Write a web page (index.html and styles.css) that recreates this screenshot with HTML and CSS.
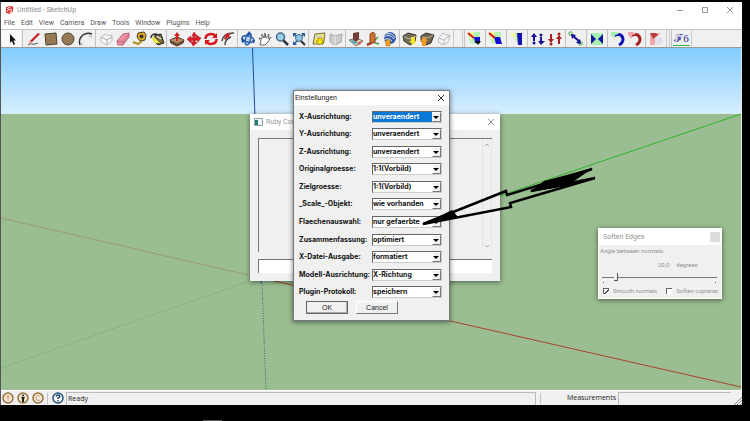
FILE: index.html
```html
<!DOCTYPE html>
<html lang="de">
<head>
<meta charset="utf-8">
<title>Untitled - SketchUp</title>
<link rel="stylesheet" href="styles.css">
</head>
<body>
<div class="app">
  <header class="titlebar">
    <svg class="logo" viewBox="0 0 10 10"><path d="M1 2l5-1.500 3 1v5L5 9.500 1 8z" fill="#e02a2a"/><path d="M2 3.500l4-1.500M3 5l4-1v3L5 8M3 5v2" stroke="#fff" fill="none"/></svg>
    <span class="app-name">Untitled - SketchUp</span>
    <div class="win-buttons">
      <button aria-label="Minimize"><svg viewBox="0 0 8 8"><path d="M1 4.500h6"/></svg></button>
      <button aria-label="Maximize"><svg viewBox="0 0 8 8"><path d="M1.500 1.500h5v5h-5z"/></svg></button>
      <button aria-label="Close"><svg viewBox="0 0 8 8"><path d="M1 1l6 6M7 1l-6 6"/></svg></button>
    </div>
  </header>
  <nav class="menubar">
    <a href="#">File</a><a href="#">Edit</a><a href="#">View</a><a href="#">Camera</a><a href="#">Draw</a><a href="#">Tools</a><a href="#">Window</a><a href="#">Plugins</a><a href="#">Help</a>
  </nav>
  <div class="toolbar">
    <div class="group first">
      <button class="active" aria-label="Select"><svg viewBox="0 0 16 16"><path d="M6 3v9l2-2 1.500 4 1.500-.8L9.500 9.500H12z" fill="#111"/></svg></button>
    </div>
    <div class="group wide">
      <button aria-label="Line"><svg viewBox="0 0 16 16"><path d="M2 14q3-2 4-1t6-1" stroke="#555" fill="none"/><path d="M3 13l1-3 8-8 2 1-8 8z" fill="#c8171d"/><path d="M3 13l1-3 2 1z" fill="#e7c69a"/></svg></button>
      <button aria-label="Rectangle"><svg viewBox="0 0 16 16"><path d="M2 3l11-1 1 11-11 1z" fill="#947b55" stroke="#4c4230"/></svg></button>
      <button aria-label="Circle"><svg viewBox="0 0 16 16"><circle cx="8" cy="8" r="6" fill="#947b55" stroke="#4c4230"/></svg></button>
      <button aria-label="Arc"><svg viewBox="0 0 16 16"><path d="M3 14Q1 8 6 4q4-3 9-1" stroke="#333" stroke-width="1.500" fill="none"/><path d="M4 14l2-2M12 4l3 2" stroke="#999"/></svg></button>
    </div>
    <div class="group">
      <button aria-label="Make Component"><svg viewBox="0 0 16 16"><path d="M3 6l4-3 3 2 4-1v6l-5 4-6-3z" fill="#f7f7f7" stroke="#bbb"/><path d="M3 6l6 3 5-3M9 9v5" stroke="#aaa" fill="none"/></svg></button>
      <button aria-label="Eraser"><svg viewBox="0 0 16 16"><path d="M2 10l6-7 6-1v4l-6 8H3z" fill="#ef92a5" stroke="#b8657b"/><path d="M2 10l6 1 6-8M8 11v3" stroke="#bb637a" fill="none"/></svg></button>
      <button aria-label="Tape Measure"><svg viewBox="0 0 16 16"><path d="M6 2l6-1 2 3-1 5-5 1-3-4z" fill="#e4ae20" stroke="#443f20"/><circle cx="9.500" cy="5.500" r="2" fill="#333"/><path d="M1 11l5 2 4-3" stroke="#b68c1d" stroke-width="2" fill="none"/></svg></button>
      <button aria-label="Paint Bucket"><svg viewBox="0 0 16 16"><path d="M6 4l6-1 3 9-6 2-4-4z" fill="#736a3d" stroke="#2c2c20"/><path d="M2 7q0-4 5-4l4 3" stroke="#333" stroke-width="1.500" fill="none"/><path d="M3 6q0 4 3 6h5L5 6z" fill="#e7e443"/><path d="M8 5l4 3" stroke="#eee" stroke-width="1.500"/></svg></button>
    </div>
    <div class="group">
      <button aria-label="Push/Pull"><svg viewBox="0 0 16 16"><path d="M1 9l7-3 7 3-1 3-6 3-6-3z" fill="#735136" stroke="#49321f"/><path d="M1 9l7 3 7-3-7-2z" fill="#b4946e"/><path d="M8 1l3 4H9v5H7V5H5z" fill="#dc1b1c"/></svg></button>
      <button aria-label="Move"><svg viewBox="0 0 16 16"><path d="M8 1l3 4H9l-.5 2 2-1L10 4l5 3-3 4-1-2-2 .5.500 2h2L7 15l-2-4h2V9l-2 1v2L1 8l4-3v2h2V5H6z" fill="#db1c22" stroke="#a31b20" stroke-width=".5"/></svg></button>
      <button aria-label="Rotate"><svg viewBox="0 0 16 16"><path d="M2.500 8q0-5 6-5 2 0 4 2M13.500 8q0 5-6 5-2 0-4-2" stroke="#d8151b" stroke-width="2.500" fill="none"/><path d="M14 2v5H9zM2 14V9h5z" fill="#d8151b"/></svg></button>
      <button aria-label="Offset"><svg viewBox="0 0 16 16"><path d="M2 10q1-8 12-8M5 14q0-6 6-8" stroke="#444" stroke-width="1.500" fill="none"/><path d="M5 3l5-1-1 5-1-1-3 3-1-2 2-2z" fill="#d3191e"/></svg></button>
    </div>
    <div class="group">
      <button aria-label="Orbit"><svg viewBox="0 0 16 16"><g fill="none" stroke="#2d62b1" stroke-width="1.700"><ellipse cx="8" cy="8" rx="6" ry="3" transform="rotate(15 8 8)"/><ellipse cx="8" cy="8" rx="2.500" ry="6" transform="rotate(15 8 8)"/></g><path d="M9 0l3 4H7zM12 9l3 0-1 4zM1 7l5 3-4 2z" fill="#204f9b"/><circle cx="8" cy="8" r="1.500" fill="#a8caf0"/></svg></button>
      <button aria-label="Pan"><svg viewBox="0 0 16 16"><path d="M3 14l1-4-2-3 3 1 0-5 2 4 1-5 1 5 3-4-1 5 3-2-3 5-3 3z" fill="#fff" stroke="#666"/></svg></button>
      <button aria-label="Zoom"><svg viewBox="0 0 16 16"><path d="M9 9l5 5" stroke="#30353b" stroke-width="2.500"/><circle cx="6.500" cy="6" r="4" fill="#9bd0e8" stroke="#456984" stroke-width="1.500"/></svg></button>
      <button aria-label="Zoom Extents"><svg viewBox="0 0 16 16"><path d="M3 3l10 10M13 3L3 13" stroke="#235c9b" stroke-width="1.500"/><path d="M2 2h4L2 6zM14 2h-4l4 4zM2 14h4l-4-4z" fill="#235c9b"/><circle cx="8" cy="7" r="3.500" fill="#8ac5e2" stroke="#496c8d"/><path d="M10 10l4 4" stroke="#333" stroke-width="2"/></svg></button>
    </div>
    <div class="group">
      <button aria-label="Add Location"><svg viewBox="0 0 16 16"><path d="M4 3l10-1-1 8-1 3H2z" fill="#f4e76d" stroke="#6c6c36"/><path d="M5 4h7l-1 3H4z" fill="#d5d7bc"/><path d="M7 7h4v3h2l-4 4-4-4h2z" fill="#fbe500" stroke="#967f00" stroke-width=".7"/></svg></button>
      <button aria-label="Toggle Terrain"><svg viewBox="0 0 16 16"><path d="M2 3l5 2 7-2-1 8-6 3-5-3z" fill="#ccc" stroke="#aaa"/><path d="M7 5v9" stroke="#eee"/></svg></button>
    </div>
    <div class="group">
      <button aria-label="Photo Textures"><svg viewBox="0 0 16 16"><path d="M1 9l7-2 7 3-7 5z" fill="#ddd6a8" stroke="#777"/><path d="M2 10l5 3 3-1-6-3z" fill="#54aac6"/><path d="M5 2l6-1v7l-3 3-3-2z" fill="#713c31"/><path d="M9 12l5-2-2 4z" fill="#d2544a"/></svg></button>
      <button aria-label="Preview in Earth"><svg viewBox="0 0 16 16"><path d="M2 13l5-2 7 2M8 11l5-5" stroke="#4b9d4c" stroke-width="1.500" fill="none"/><path d="M5 3l3-2 2 2v8l-3 1-2-1z" fill="#d3722c" stroke="#88451e"/><path d="M2 14l5-2" stroke="#bd2c2c" stroke-width="2"/></svg></button>
      <button aria-label="Google Earth"><svg viewBox="0 0 16 16"><circle cx="8" cy="7" r="6" fill="#3159a4"/><path d="M2 6q5-4 10 2M4 3q6-2 9 4M2 9q4-3 8 1" stroke="#d9e5f6" fill="none"/><path d="M6 8l3 3H8v4H4v-4H3z" fill="#f6a01c" stroke="#b66b12" stroke-width=".5"/></svg></button>
    </div>
    <div class="group">
      <button aria-label="Get Models"><svg viewBox="0 0 16 16"><path d="M1 5l5-3 8 2-1 7-5 3-6-4z" fill="#716b59" stroke="#38352c"/><path d="M2 6l6 2 6-3" stroke="#c3b99d" fill="none"/><path d="M9 6h4v4h2l-4 4-4-4h2z" fill="#f6e32c"/></svg></button>
      <button aria-label="Share Model"><svg viewBox="0 0 16 16"><path d="M2 5l5-3 8 2-3 8-5 2-5-4z" fill="#716352" stroke="#38352c"/><path d="M3 6l6 1 5-3" stroke="#c3b99d" fill="none"/><path d="M5 6l4 4H7v5H3v-5H1z" fill="#f49c22"/></svg></button>
      <button aria-label="Share Component"><svg viewBox="0 0 16 16"><path d="M3 7l4-5 3 2h4l-2 7-4 3-6-3z" fill="#f3f3f3" stroke="#bbb"/><path d="M3 7l5 2 5-4M8 9v5" stroke="#bbb" fill="none"/></svg></button>
    </div>
    <div class="gripper"></div>
    <div class="group single">
      <button aria-label="Place on point"><svg viewBox="0 0 16 16"><path d="M1 1h12v12L3 12z" fill="#b7f1b0"/><path d="M1 1h6l-3 10z" fill="#fff799"/><path d="M7 6h6v6H8z" fill="#1111d6"/><path d="M1 2l6 5" stroke="#d51515" stroke-width="2"/><path d="M8 10h6l-3 4z" fill="#111"/></svg></button>
    </div>
    <div class="group single">
      <button aria-label="Align point"><svg viewBox="0 0 16 16"><path d="M1 1h12v12L3 12z" fill="#b7f1b0"/><path d="M1 1h6l-3 10z" fill="#fff799"/><path d="M6 6h6l2 7H8z" fill="#1111d6"/><path d="M1 2l6 5" stroke="#d51515" stroke-width="2"/></svg></button>
    </div>
    <div class="group single">
      <button aria-label="Align face"><svg viewBox="0 0 16 16"><path d="M1 2h8v10z" fill="#b7f1b0"/><path d="M1 2h4l3 7z" fill="#fff799"/><path d="M8 2h5v12H9z" fill="#1111b6"/></svg></button>
    </div>
    <div class="group single">
      <button aria-label="Flip up"><svg viewBox="0 0 16 16"><path d="M4 2l3 4H5v4H3V6H1z" fill="#12129d"/><circle cx="4" cy="12" r="1.500" fill="#12129d"/><path d="M11 14l4-4h-3V6h-2v4H8z" fill="#12129d"/><circle cx="11" cy="4" r="1.500" fill="#12129d"/></svg></button>
      <button aria-label="Flip down"><svg viewBox="0 0 16 16"><path d="M4 12l3-4H5V3H3v5H1z" fill="#a92020"/><circle cx="4" cy="13" r="1.500" fill="#a92020"/><circle cx="12" cy="3" r="1.500" fill="#a92020"/><path d="M12 4l3 4h-2v5h-2V8H9z" fill="#a92020"/></svg></button>
    </div>
    <div class="group single">
      <button aria-label="Connect points"><svg viewBox="0 0 16 16"><path d="M1 1h3v3H1zM11 11h3v3h-3z" fill="#fff" stroke="#55b44e"/><path d="M4 4l8 7" stroke="#10109a" stroke-width="2"/><path d="M3 3l5 1-4 4zM13 13l-5-1 4-4z" fill="#10109a"/></svg></button>
    </div>
    <div class="group single">
      <button aria-label="Mirror"><svg viewBox="0 0 16 16"><path d="M2 2h12v12H2z" fill="#a7efb1"/><path d="M2 3l5 5-5 5zM14 3L9 8l5 5z" fill="#14149e"/></svg></button>
    </div>
    <div class="group single">
      <button aria-label="Rotate left"><svg viewBox="0 0 16 16"><path d="M3 5q9-4 10 3 0 4-4 6" stroke="#1313b2" stroke-width="3" fill="none"/><path d="M1 1l5 0 3 2-4 1v4L1 4z" fill="#a6ecac"/></svg></button>
      <button aria-label="Rotate right"><svg viewBox="0 0 16 16"><path d="M3 5q9-4 10 3 0 4-4 6" stroke="#a32222" stroke-width="3" fill="none"/><path d="M1 1l5 0 3 2-4 1v4L1 4z" fill="#efa5a5"/></svg></button>
    </div>
    <div class="group single">
      <button aria-label="Bend"><svg viewBox="0 0 16 16"><path d="M2 2h11L7 7v7H2z" fill="#efa9aa"/><path d="M2 2l6 0 2 2-5 4z" fill="#ba3b42"/><circle cx="11" cy="10" r="4" fill="#dedeed"/></svg></button>
    </div>
    <div class="gripper"></div>
    <div class="group last">
      <button class="script">ℱ6</button>
    </div>
  </div>

  <main class="scene">
    <svg class="axes" viewBox="0 0 740 342" preserveAspectRatio="none">
      <path d="M251.500 0L260 235" stroke="#27479b"/>
      <path d="M261 235l4 107" stroke="#3f6572" stroke-dasharray="1 1.500"/>
      <path d="M0 170l260 60" stroke="#a0664d" stroke-dasharray="1 1.500"/>
      <path d="M260 230l480 109" stroke="#a8432f"/>
      <path d="M0 320l260-91" stroke="#5bb054" stroke-dasharray="1 1.500"/>
      <path d="M260 229L740 66" stroke="#34b12e"/>
    </svg>

    <section class="window console">
      <div class="window-title">
        <svg class="console-icon" viewBox="0 0 9 8"><path d="M.5.500h8v7h-8z" fill="#eef3f3" stroke="#8aa0a5"/><path d="M1 2h3v5H1z" fill="#277d78"/></svg>
        <span>Ruby Console</span>
        <button class="close" aria-label="Close"><svg viewBox="0 0 8 8"><path d="M1 1l6 6M7 1l-6 6"/></svg></button>
      </div>
      <div class="output"><div class="scroll"><svg viewBox="0 0 6 4"><path d="M1 3l2-2 2 2"/></svg><svg viewBox="0 0 6 4"><path d="M1 1l2 2 2-2"/></svg></div></div>
      <input class="command" type="text" aria-label="Ruby">
    </section>

    <section class="window soften">
      <div class="window-title"><span>Soften Edges</span><button class="close" aria-label="Close"></button></div>
      <div class="soften-body">
        <label for="angle">Angle between normals:</label>
        <div class="reading"><span>20,0</span><span>degrees</span></div>
        <input id="angle" type="range" min="0" max="180" value="20">
        <div class="ticks"><i></i><i></i></div>
        <div class="checks">
          <label><input type="checkbox" checked>Smooth normals</label>
          <label><input type="checkbox">Soften coplanar</label>
        </div>
      </div>
    </section>

    <form class="window settings">
      <div class="window-title"><span>Einstellungen</span><button type="button" class="close" aria-label="Close"><svg viewBox="0 0 8 8"><path d="M1 1l6 6M7 1l-6 6"/></svg></button></div>
      <div class="fields">
        <label for="f1">X-Ausrichtung:</label><div class="combo chosen"><select id="f1"><option>unveraendert</option></select></div>
        <label for="f2">Y-Ausrichtung:</label><div class="combo"><select id="f2"><option>unveraendert</option></select></div>
        <label for="f3">Z-Ausrichtung:</label><div class="combo"><select id="f3"><option>unveraendert</option></select></div>
        <label for="f4">Originalgroesse:</label><div class="combo"><select id="f4"><option>1:1(Vorbild)</option></select></div>
        <label for="f5">Zielgroesse:</label><div class="combo"><select id="f5"><option>1:1(Vorbild)</option></select></div>
        <label for="f6">_Scale_-Objekt:</label><div class="combo"><select id="f6"><option>wie vorhanden</option></select></div>
        <label for="f7">Flaechenauswahl:</label><div class="combo"><select id="f7"><option>nur gefaerbte</option></select></div>
        <label for="f8">Zusammenfassung:</label><div class="combo"><select id="f8"><option>optimiert</option></select></div>
        <label for="f9">X-Datei-Ausgabe:</label><div class="combo"><select id="f9"><option>formatiert</option></select></div>
        <label for="f10">Modell-Ausrichtung:</label><div class="combo"><select id="f10"><option>X-Richtung</option></select></div>
        <label for="f11">Plugin-Protokoll:</label><div class="combo"><select id="f11"><option>speichern</option></select></div>
      </div>
      <div class="actions"><button type="button" class="default">OK</button><button type="button">Cancel</button></div>
    </form>

    <svg class="pointer" viewBox="0 0 176 60">
      <path d="M1 57L84 24 85 28 170 2 109 24 173 11 88 36 89 40z" fill="none" stroke="#000" stroke-width="2.500" stroke-linejoin="miter" stroke-miterlimit="2"/>
      <path d="M0 58L30 43 36 50zM171 1L122 14 108 25 145 19z"/>
    </svg>
  </main>

  <footer class="status">
    <button aria-label="Location"><svg viewBox="0 0 12 12"><circle cx="6" cy="6" r="5" fill="#f4e8d2" stroke="#967038" stroke-width="1.500"/><circle cx="6" cy="4.500" r="1.500" fill="#e6a58d"/><path d="M6 5v4" stroke="#e6a58d"/></svg></button>
    <button aria-label="Credits"><svg viewBox="0 0 12 12"><circle cx="6" cy="6" r="5" fill="#f4e8d2" stroke="#967038" stroke-width="1.500"/><circle cx="6" cy="3.500" r="1" fill="#222"/><path d="M4 5h4L7 7v3H5V7z" fill="#222"/></svg></button>
    <button aria-label="Sign in"><svg viewBox="0 0 12 12"><circle cx="6" cy="6" r="5" fill="#f4e8d2" stroke="#967038" stroke-width="1.500"/><path d="M8 4a2.500 2.500 0 1 0 0 4" fill="none" stroke="#b5a282"/></svg></button>
    <span class="divider"></span>
    <button aria-label="Help"><svg viewBox="0 0 12 12"><circle cx="6" cy="6" r="5" fill="#fff" stroke="#204f7c" stroke-width="1.500"/><path d="M4 4.500Q4.500 3 6 3t2 1.500Q8 5.500 6 6v1M6 8v1.500" fill="none" stroke="#173958" stroke-width="1.300"/></svg></button>
    <output class="message">Ready</output>
    <span class="divider"></span>
    <label for="vcb">Measurements</label>
    <input id="vcb" type="text">
    <svg class="grip" viewBox="0 0 9 9"><path d="M1 9l8-8M4 9l5-5M7 9l2-2" stroke="#888" fill="none"/></svg>
  </footer>
</div>
<div class="taskbar"><i></i></div>
</body>
</html>
```
FILE: styles.css
```css
*, *::before, *::after { box-sizing: border-box; }
body {
  margin: 0;
  min-height: 100vh;
  display: flex;
  flex-direction: column;
  background: #000;
  color: #222;
  font: 7px/10px "Open Sans", "Noto Sans", sans-serif;
  overflow: hidden;
}
button { padding: 0; border: 0; background: none; font: inherit; color: inherit; }
svg { display: block; }
.app {
  flex: 1;
  display: flex;
  flex-direction: column;
  margin: 2px 8px 0 0;
  border-left: 1px solid #555;
  background: #fff;
}

.titlebar { display: flex; align-items: center; height: 16px; padding-left: 4px; font-family: Roboto, sans-serif; color: #8a8a8a; }
.logo { width: 9px; height: 10px; margin-right: 3px; }
.win-buttons { display: flex; margin-left: auto; gap: 17px; padding-right: 8px; }
.win-buttons svg, .close svg { width: 8px; height: 8px; fill: none; stroke: #999; }
.menubar { display: flex; gap: 6px; height: 11px; padding-left: 3px; font-family: Roboto, sans-serif; }
.menubar a { color: #555; text-decoration: none; }

.toolbar { display: flex; height: 19px; background: #f0f0f0; border-top: 1px solid #c4c4c4; border-bottom: 1px solid #999; }
.group { display: flex; align-items: center; padding: 0 1px; border-left: 1px solid #c2c2c2; }
.group.first { border-left: 0; }
.group.wide { padding: 0 2px; }
.group.single { padding-right: 2px; }
.group button { width: 17px; height: 17px; display: grid; place-items: center; }
.group.first button { width: 19px; }
.group svg { width: 16px; height: 16px; }
.group .active { background: #fafafa; }
.gripper { width: 10px; margin-right: 1px; border: solid #ccc; border-width: 0 1px; }
.group.single + .gripper { width: 4px; }
.group.last { border-right: 1px solid #ccc; }
.group .script { color: #24248b; font: 11px/13px "Liberation Serif", "DejaVu Serif", serif; height: 14px; border-bottom: 1px solid #38ba48; }

.scene {
  flex: 1;
  position: relative;
  overflow: hidden;
  border-right: 1px solid #e0e8e0;
  background: linear-gradient(#82ccff, #d8efff 66px, #9abd91 66px);
}
.axes { position: absolute; width: 100%; height: 100%; fill: none; }

.window { position: absolute; display: flex; flex-direction: column; background: #f0f0f0; box-shadow: 0 1px 5px #0008; }
.window-title { display: flex; align-items: center; background: #fff; flex: none; }
.close { margin-left: auto; }

.console { left: 249px; top: 66px; width: 250px; height: 167px; padding-bottom: 8px; color: #999; font-family: Roboto, sans-serif; }
.console .window-title { height: 16px; padding: 0 5px 0 4px; }
.console-icon { width: 9px; height: 8px; margin-right: 3px; }
.output { flex: 1; display: flex; margin: 8px 8px 7px; border: solid #777; border-width: 1px 0 0 1px; }
.scroll { display: flex; flex-direction: column; justify-content: space-between; align-items: center; width: 10px; margin-left: auto; padding: 4px 0; border: solid #e4e4e4; border-width: 0 1px; }
.scroll svg { width: 6px; height: 4px; fill: none; stroke: #aaa; }
.command { height: 14px; margin: 0 8px; border: solid #777; border-width: 1px 0 0 1px; background: #fff; }

.soften { left: 597px; top: 180px; width: 124px; color: #929292; border: 1px solid #fff; font-family: Roboto, sans-serif; }
.soften .window-title { height: 16px; padding-left: 4px; }
.soften .close { width: 10px; height: 10px; margin-right: 1px; background: #ddd; }
.soften-body { display: flex; flex-direction: column; padding: 1px 4px 2px 1px; font-size: 6px; white-space: nowrap; }
.reading { display: flex; gap: 7px; margin: 4px 0 3px 58px; }
.soften input[type="range"] {
  appearance: none;
  height: 8px;
  margin: 0 0 0 2px;
  background: linear-gradient(#777, #777) center / 100% 1px no-repeat;
}
.soften input[type="range"]::-webkit-slider-thumb { appearance: none; width: 4px; height: 8px; background: #f0f0f0; border: solid #555; border-width: 0 1px 1px 0; }
.ticks { display: flex; justify-content: space-between; padding: 1px 1px 0 3px; }
.ticks i { width: 1px; height: 1px; background: #555; }
.checks { display: flex; gap: 9px; margin: 3px 0 0 3px; }
.checks label { display: flex; align-items: center; gap: 4px; }
.checks input { appearance: none; width: 6px; height: 6px; margin: 0; border: solid #666; border-width: 1px 0 0 1px; background: #fff; }
.checks input:checked { background: linear-gradient(135deg, #fff 45%, #555 45% 65%, #fff 65%); }

.settings { left: 292px; top: 42px; width: 157px; border: 1px solid #777; }
.settings .window-title { height: 14px; padding: 0 4px 0 1px; font-family: Roboto, sans-serif; }
.settings .close svg { stroke: #333; }
.fields {
  display: grid;
  grid-template-columns: 73px 1fr;
  grid-auto-rows: 1fr;
  align-items: center;
  min-height: 196px;
  padding: 3px 7px 0 5px;
  color: #111;
  font: bold 7px/10px Inter, "Liberation Sans", sans-serif;
}
.fields label { white-space: nowrap; }
.combo { position: relative; height: 12px; border: 1px solid #777; border-color: #666 #ccc #ccc #666; background: #fff; }
.combo select { appearance: none; display: block; width: 60px; height: 10px; padding: 0; border: 0; border-radius: 0; background: none; font: inherit; color: inherit; }
.chosen select { background: #0a78d7; color: #fff; }
.combo::before { content: ""; position: absolute; right: 0; top: 0; width: 9px; height: 10px; background: #f0f0f0; border: 1px solid #999; border-color: #fff #777 #777 #fff; }
.combo::after { content: ""; position: absolute; right: 2px; top: 4px; border: 3px solid transparent; border-top-color: #000; border-bottom: 0; }
.actions { display: flex; gap: 8px; padding: 0 0 6px 12px; }
.actions button { width: 42px; height: 13px; border: 1px solid #999; border-color: #fff #777 #777 #fff; font: 7px/10px "Liberation Sans", Arial, sans-serif; }
.actions .default { border-color: #666; box-shadow: inset -1px -1px #aaa; }
.pointer { position: absolute; left: 421px; top: 119px; width: 176px; height: 60px; }

.status { display: flex; align-items: center; height: 15px; background: #f0f0f0; border-top: 1px solid #fff; padding-left: 1px; }
.status button { margin-right: 3px; }
.status button svg { width: 12px; height: 12px; }
.divider { width: 1px; height: 11px; background: #c4c4c4; }
.status .divider + button { margin: 0 2px 0 4px; }
.message { flex: 1; height: 13px; line-height: 12px; padding-left: 1px; margin-right: 4px; border: solid #bbb; border-width: 1px 1px 0; }
.status label { margin: 0 2px 0 26px; }
.status input { width: 113px; height: 13px; border: solid #bbb; border-width: 1px 0 0 1px; background: none; }
.grip { width: 9px; height: 9px; align-self: flex-end; margin-left: 2px; }
.taskbar { display: flex; align-items: flex-end; height: 16px; padding-left: 203px; }
.taskbar i { width: 19px; height: 1px; background: #555; }
```
